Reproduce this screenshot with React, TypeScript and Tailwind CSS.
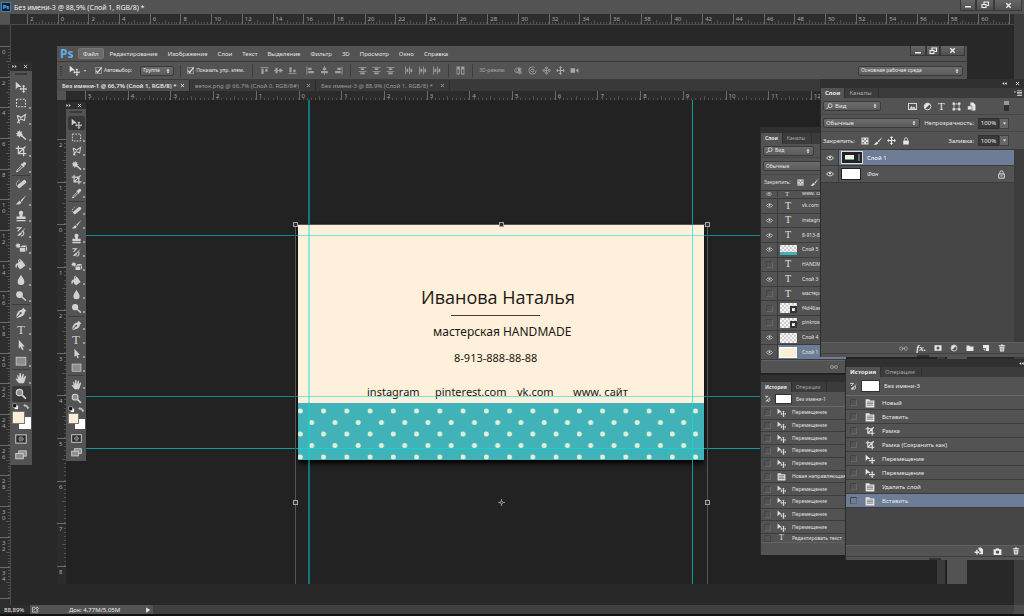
import type { ReactNode } from 'react';

type IconProps = { name: string; className?: string };

// 16x16 glyphs, drawn with currentColor
const glyphs: Record<string, ReactNode> = {
    move: (
        <>
            <path d="M1 1v10l3-3h5z" />
            <path d="M11.500 5l2.300 2.300h-1.500v2.400h2.400V8.200L16 10.500l-2 2.300v-1.500h-1.700v2.400h1.500L11.500 16l-2.300-2.300h1.500v-2.400H8.300v1.500L6 10.500l2.300-2.300v1.500h2.400V7.300H9.200z" />
        </>
    ),
    marquee: <rect x="2" y="3" width="12" height="10" fill="none" stroke="currentColor" strokeWidth="1.400" strokeDasharray="2.600 1.600" />,
    lasso: <path d="M3 3l5 3 6-4-1.500 8-5-2L5 11l1 3M3 3l2 8-2 2" fill="none" stroke="currentColor" strokeWidth="1.500" />,
    wand: (
        <>
            <path d="M6 1l1 2.800L9.500 3 8.600 5.500 11 7 8.600 8l.6 2.500L7 9.400 5.500 12l-.8-2.800L2 9.500l1.200-2.300L1 5.500l2.500-.6L3.200 2.200 5.300 3.500z" />
            <path d="M8 8l6.500 6" stroke="currentColor" strokeWidth="2" />
        </>
    ),
    crop: <path d="M4.500 1v10.500H15M1 4.500h10.500V15M5 11L14 2" fill="none" stroke="currentColor" strokeWidth="1.700" />,
    eyedropper: (
        <>
            <path d="M9.500 4l1-1.500c1-1.500 2.800-1.600 3.600-.6 1 .9.800 2.600-.6 3.600L12 6.500l.8.8-1.200 1.200-4-4 1.200-1.200z" />
            <path d="M9 6l-6 6-1 2.500L4.500 13.500l6-6" fill="none" stroke="currentColor" strokeWidth="1.300" />
        </>
    ),
    heal: (
        <>
            <rect x="2" y="5.500" width="14" height="5" rx="2.500" transform="rotate(-40 9 8)" />
            <path d="M2 10c-1-3 1-6 4-7" fill="none" stroke="currentColor" strokeWidth="1.200" strokeDasharray="1.500 1" />
        </>
    ),
    brush: (
        <>
            <path d="M15.500 1L7.500 8.500l1.500 1.800z" />
            <path d="M6.500 9l2 2.200C7.500 14 3.500 14.500 1 13.500c2.500-.5 2.500-3.500 5.500-4.500z" />
        </>
    ),
    stamp: <path d="M8 1a3 3 0 0 1 2 5.200V8.500h4V12H2V8.500h4V6.200A3 3 0 0 1 8 1zM2 13.200h12V15H2z" />,
    history: (
        <>
            <path d="M14.500 2L8 8l1 1.500zM7.500 8.500L9 10c-1 3-4 3.500-6.500 3 2-.7 2.500-3.500 5-4.500z" />
            <path d="M2 2.500h6L3.500 7M11 7c2 3 0 6-3 6.500" fill="none" stroke="currentColor" strokeWidth="1.500" />
        </>
    ),
    eraser: (
        <>
            <path d="M7 7l3-2.500h6L14 7zM6.500 8h7v5h-7zM14.500 8L16 6v4.500L14.500 13z" />
            <path d="M4 1l1 2 2-.5L6.300 4.500 8 6 6 6.500l-.5 2L4 7 2 8l.2-2.200L0 5l2-1.200L1.800 2l1.700.8z" />
        </>
    ),
    bucket: (
        <>
            <path d="M3 7l6-4 5 7-6.500 5C5 14 3 11 3 7z" />
            <path d="M9 6L6.500 1.500 5 2.500v4" fill="none" stroke="currentColor" strokeWidth="1.300" />
            <path d="M3 7c-3 1-3 4-1.500 7 .8-2 1-4 2.500-5z" />
        </>
    ),
    drop: <path d="M8 1c1.500 3.500 4.500 6 4.500 9A4.500 4.500 0 0 1 8 14.800 4.500 4.500 0 0 1 3.500 10C3.500 7 6.500 4.500 8 1z" />,
    dodge: (
        <>
            <circle cx="6" cy="6" r="4.500" />
            <path d="M9 9l5.500 5" stroke="currentColor" strokeWidth="2" />
        </>
    ),
    pen: (
        <>
            <path d="M11 1l4 4-2 1.500c0 4-3 6-7 7L2.500 15 2 14.500l5-5a1.400 1.400 0 1 0-.8-.8L1.500 13.500C2.500 8 4 4.500 9 3.500z" />
        </>
    ),
    arrow: <path d="M5 1v12l2.600-2.500L9.500 15l2-1-1.800-4H13z" />,
    shape: <rect x="1.500" y="3" width="13" height="10.500" fill="#8d8d8d" stroke="currentColor" />,
    hand: <path d="M5 15C3.500 12.500 2 11 .8 9.200 1.800 8 3.200 9 4 10L2.800 4.500C4 3.500 4.600 4.500 5.500 8L6 2c1-1 1.800-.5 2 0l.3 5.500L10.200 2.500c1-.7 1.800 0 1.600.8L11 8.500l2.200-3.300c1-.5 1.700.3 1.500 1C13.500 9.500 13 13 11.500 15z" />,
    zoom: (
        <>
            <circle cx="6" cy="6" r="4.200" fill="#8d8d8d" stroke="currentColor" strokeWidth="1.600" />
            <path d="M9.500 9.500l5 4.800" stroke="currentColor" strokeWidth="2.400" />
        </>
    ),
    mask: (
        <>
            <rect x="1" y="2.500" width="14" height="11" fill="#2c2c2c" stroke="currentColor" strokeWidth="1.300" />
            <circle cx="8" cy="8" r="3" fill="#6a6a6a" stroke="currentColor" strokeDasharray="1 1" />
        </>
    ),
    screens: (
        <>
            <rect x="5" y="2.500" width="10" height="7" fill="#8d8d8d" stroke="currentColor" strokeWidth="1.200" />
            <rect x="1" y="6" width="10" height="7" fill="#8d8d8d" stroke="currentColor" strokeWidth="1.200" />
        </>
    ),
    swap: <path d="M3 6c4-3 8-1 8 4M1 6l4-4v7zM8 9h6l-3 5z" stroke="currentColor" fill="currentColor" fillOpacity=".9" strokeWidth=".5" />,
    defaults: (
        <>
            <rect x="6" y="6" width="8" height="8" fill="#fff" />
            <rect x="2" y="2" width="8" height="8" fill="#111" stroke="#ddd" />
        </>
    ),
    eye: (
        <>
            <path d="M1 8c3-5 11-5 14 0-3 5-11 5-14 0z" fill="none" stroke="currentColor" strokeWidth="1.600" />
            <circle cx="8" cy="7" r="2" />
        </>
    ),
    doc: (
        <>
            <path d="M1 2h6l1 2h7v11H1z" />
            <path d="M3 6.500h10M3 9h10M3 11.500h10" stroke="#666" strokeWidth="1.200" />
        </>
    ),
    image: (
        <>
            <rect x="1" y="2.500" width="14" height="11" fill="none" stroke="currentColor" strokeWidth="1.600" />
            <path d="M3 12l3-5 2.500 3L11 8l2.500 4z" />
        </>
    ),
    adjust: (
        <>
            <circle cx="8" cy="8" r="6" fill="none" stroke="currentColor" strokeWidth="1.500" />
            <path d="M12.200 3.800A6 6 0 0 0 3.800 12.200z" />
        </>
    ),
    vector: (
        <>
            <rect x="3.500" y="3.500" width="9" height="9" fill="none" stroke="currentColor" strokeWidth="1.300" />
            <path d="M1 1h4v4H1zM11 1h4v4h-4zM1 11h4v4H1zM11 11h4v4h-4z" />
        </>
    ),
    smart: (
        <>
            <path d="M6 1h5l4 4v10H8V9H6z" />
            <path d="M1 7h8v7H1z" stroke="#535353" />
        </>
    ),
    checker: (
        <>
            <rect x="1" y="1" width="14" height="14" fill="#ddd" />
            <path d="M3 3h3v3H3zM10 3h3v3h-3zM6.500 6.500h3v3h-3zM3 10h3v3H3zM10 10h3v3h-3z" fill="#777" />
        </>
    ),
    cross: <path d="M8 0l3 3.500H9V7h3.500V5L16 8l-3.500 3V9H9v3.500h2L8 16l-3-3.500h2V9H3.500v2L0 8l3.500-3v2H7V3.500H5z" />,
    lock: (
        <>
            <path d="M2.500 7h11v8h-11z" />
            <path d="M5 7V4.500a3 3 0 0 1 6 0V7" fill="none" stroke="currentColor" strokeWidth="1.600" />
        </>
    ),
    lockOutline: (
        <>
            <path d="M3 7h10v7.500H3zM5 7V4.500a3 3 0 0 1 6 0V7M6 10.500h4" fill="none" stroke="currentColor" strokeWidth="1.600" />
        </>
    ),
    link: <path d="M7 8a3 3 0 1 1-6 0 3 3 0 0 1 6 0zm8 0a3 3 0 1 1-6 0 3 3 0 0 1 6 0zM5 8h6" fill="none" stroke="currentColor" strokeWidth="1.600" />,
    addMask: <path fillRule="evenodd" d="M1 2.500h14v11H1zM8 5a3 3 0 1 0 0 6 3 3 0 0 0 0-6z" />,
    folder: <path d="M1 3h5.500l1.500 2h7v9H1z" />,
    newLayer: <path d="M2 2h12v12H8V8H2zM2 9.500h4.500V14z" />,
    trash: <path fillRule="evenodd" d="M6 1h4v1.500h4.500v2h-13v-2H6zM3 5.500h10l-1 9.500H4zM5.500 7l.4 6.500h.9V7zM9.200 7v6.500h.9l.4-6.500z" />,
    camera: <path fillRule="evenodd" d="M1 4h4l1-2h4l1 2h4v10H1zM8 6a3 3 0 1 0 0 6 3 3 0 0 0 0-6z" />,
    newDoc: <path d="M8 1h4l4 3v9H9.500v-2.500h2v-3H9.500V5H8zM4 5h2.500v3h3v2.500h-3v3H4v-3H1V8h3z" />,
    search: (
        <>
            <circle cx="9.500" cy="6" r="4.500" fill="none" stroke="currentColor" strokeWidth="1.800" />
            <path d="M6 9l-5 5" stroke="currentColor" strokeWidth="2" />
        </>
    ),
    alignTop: <path d="M1 2h14v1.400H1zM2.500 5h4v9h-4zM9.500 5h4v5h-4z" />,
    alignMid: <path d="M0 7.300h16v1.400H0zM2.500 3h4v10h-4zM9.500 5h4v6h-4z" />,
    alignBottom: <path d="M1 13h14v1.400H1zM2.500 2h4v9h-4zM9.500 6h4v5h-4z" />,
    alignLeft: <path d="M1 1h1.400v14H1zM4 3h6v4H4zM4 9h10v4H4z" />,
    alignCenter: <path d="M7.300 0h1.400v16H7.300zM5 3h6v4H5zM2 9h12v4H2z" />,
    alignRight: <path d="M13.600 1H15v14h-1.400zM6 3h6v4H6zM2 9h10v4H2z" />,
    distV: <path d="M1 2h14v1.400H1zM5 4h6v3H5zM1 9h14v1.400H1zM4 11.500h8v3H4z" />,
    distH: <path d="M2 1h1.400v14H2zM4.500 5h3v6h-3zM9 1h1.400v14H9zM11.500 5h3v6h-3z" />,
    autoAlign: <path fillRule="evenodd" d="M1 1h6v14H1zM9 1h6v14H9zM2.500 6v7.500h3V6zM10.500 6v7.500h3V6z" />,
    orbit: (
        <>
            <path d="M14 6C11 2 3 3 1 7c-1 4 5 6 10 5l-1 2 4-2.500L11 9l.3 1.500C7 11 4 10 4 8" fill="none" stroke="currentColor" strokeWidth="1.400" />
            <circle cx="9.500" cy="7" r="2.600" />
        </>
    ),
    roll: (
        <>
            <circle cx="8" cy="8" r="6.500" fill="none" stroke="currentColor" strokeWidth="1.400" strokeDasharray="34 5" />
            <circle cx="8" cy="8" r="2.600" fill="none" stroke="currentColor" strokeWidth="1.600" />
        </>
    ),
    pan: <path d="M8 1l2.500 3h-5zM8 15l2.500-3h-5zM1 8l3-2.500v5zM15 8l-3-2.500v5zM8 5.500v5M5.500 8h5" fill="none" stroke="currentColor" strokeWidth="1.400" />,
    video: <path d="M1 4h8v8H1zM10 8l5-4v8z" />,
    share: <path d="M7 3H1v11h12v-4M5 10c0-4 2-5 6-5V2l4 4-4 4V7" fill="none" stroke="currentColor" strokeWidth="1.500" />,
    menu: <path d="M0 5h4L2 8zM6 3h10v1.500H6zM6 6h10v1.500H6zM6 9h10v1.500H6zM6 12h10v1.500H6z" />,
    check: <path d="M2 8l4 5 9-12" fill="none" stroke="currentColor" strokeWidth="2.600" />,
    updown: <path d="M8 2l4 5H4zM8 14l4-5H4z" />,
    restore: (
        <>
            <path d="M6 6V2h9v7h-4" fill="none" stroke="currentColor" strokeWidth="2.200" />
            <rect x="2" y="7" width="8" height="6" fill="none" stroke="currentColor" strokeWidth="2.200" />
        </>
    ),
    minimize: <path d="M2 10h12v3H2z" />,
    close: <path d="M3 3l10 10M13 3L3 13" stroke="currentColor" strokeWidth="3" />,
    play: <path d="M3 1l11 7-11 7z" />,
    down: <path d="M3 5h10l-5 6z" />,
    collapse: <path d="M7 3v10L1 8zM15 3v10L9 8z" />,
    expand: <path d="M1 3v10l6-5zM9 3v10l6-5z" />,
    pivot: <path d="M8 0v5M8 11v5M0 8h5M11 8h5M8 5a3 3 0 1 0 0 6 3 3 0 0 0 0-6" fill="none" stroke="currentColor" strokeWidth="1.800" />
};

function Icon({ name, className = 'size-[9px]' }: IconProps) {
    return (
        <svg viewBox="0 0 16 16" fill="currentColor" className={`shrink-0 ${className}`} aria-hidden="true">
            {glyphs[name]}
        </svg>
    );
}

function TypeGlyph({ className = 'text-[11px]' }: { className?: string }) {
    return <span className={`font-['Liberation_Serif',serif] leading-none ${className}`}>T</span>;
}

/* ---------- rulers ---------- */

function Ruler({ labels, vertical = false }: { labels: string[]; vertical?: boolean }) {
    return (
        <div className={`flex min-h-0 min-w-0 flex-1 ${vertical ? 'flex-col' : ''}`}>
            {labels.map((label, i) => (
                <div
                    key={i}
                    className={`relative flex min-h-0 min-w-0 flex-1 border-[#6a6a6a] text-[6px] leading-[6px] text-[#a8a8a8] ${vertical ? 'flex-col items-end border-t' : 'items-end border-l'}`}
                >
                    {Array.from({ length: 10 }, (_, t) => (
                        <i
                            key={t}
                            className={
                                vertical
                                    ? `flex-1 border-b border-[#505050] ${t === 4 ? 'w-1' : 'w-0.5'} last:border-0`
                                    : `flex-1 border-r border-[#505050] ${t === 4 ? 'h-1' : 'h-0.5'} last:border-0`
                            }
                        />
                    ))}
                    {label && (
                        <span className={`absolute ${vertical ? 'top-0.5 left-0.5 w-1 break-all' : 'top-0.5 left-0.5'}`}>
                            {label}
                        </span>
                    )}
                </div>
            ))}
        </div>
    );
}

const range = (from: number, to: number, step: number) => {
    const out: string[] = [];
    for (let n = from; n <= to; n += step) out.push(String(Math.abs(n)));
    return out;
};

/* ---------- small controls ---------- */

type SelectProps = { label: string; value: string; className: string; icon?: string };

function Select({ label, value, className, icon }: SelectProps) {
    return (
        <div className={`relative flex h-[10px] items-center rounded-xs border border-[#3a3a3a] bg-linear-to-b from-[#6c6c6c] to-[#5b5b5b] text-[#e8e8e8] ${className}`}>
            {icon && <Icon name={icon} className="ml-0.5 size-[7px]" />}
            <select aria-label={label} className="h-full w-full min-w-0 appearance-none pl-0.5 leading-none outline-none">
                <option>{value}</option>
            </select>
            <Icon name="updown" className="pointer-events-none absolute right-0.5 size-[6px]" />
        </div>
    );
}

function Check({ label }: { label: string }) {
    return (
        <label className="flex items-center gap-0.5 whitespace-nowrap">
            <span className="relative flex size-[7px]">
                <input type="checkbox" defaultChecked className="size-full appearance-none border border-[#8a8a8a] bg-[#5e5e5e]" />
                <Icon name="check" className="pointer-events-none absolute inset-0 size-[7px]" />
            </span>
            {label}
        </label>
    );
}

function Percent({ label, value }: { label: string; value: string }) {
    return (
        <label className="flex items-center gap-1 whitespace-nowrap">
            {label}
            <span className="flex h-[11px]">
                <input defaultValue={value} className="w-[21px] border border-[#303030] bg-[#393939] text-center text-[#ececec]" />
                <button aria-label={`${label} ▾`} className="flex w-[10px] items-center justify-center border border-[#404040] bg-[#666]">
                    <Icon name="down" className="size-[5px]" />
                </button>
            </span>
        </label>
    );
}

function WindowButtons({ small = false }: { small?: boolean }) {
    const cell = 'flex items-center justify-center border-x border-b border-[#383838] bg-linear-to-b from-[#666] to-[#505050] text-[#f0f0f0]';
    return (
        <div className={`flex self-start ${small ? 'h-[10px]' : 'h-[11px]'}`}>
            <button aria-label="Свернуть" className={`${cell} w-4`}><Icon name="minimize" className="size-[8px]" /></button>
            <button aria-label="Восстановить" className={`${cell} ${small ? 'w-[14px]' : 'w-[18px]'}`}><Icon name="restore" className="size-[8px]" /></button>
            <button aria-label="Закрыть" className={`${cell} ${small ? 'w-[25px]' : 'w-[28px]'}`}><Icon name="close" className="size-[7px]" /></button>
        </div>
    );
}

/* ---------- toolbox ---------- */

const toolGroups = [
    ['move', 'marquee', 'lasso', 'wand', 'crop', 'eyedropper'],
    ['heal', 'brush', 'stamp', 'history', 'eraser', 'bucket', 'drop', 'dodge'],
    ['pen', 'type', 'arrow', 'shape'],
    ['hand', 'zoom']
];

function Toolbox({ active, small = false }: { active: string; small?: boolean }) {
    const row = small ? 'h-[14px]' : 'h-4';
    const size = small ? 'size-[11px]' : 'size-[12px]';
    return (
        <div className={`bg-[#535353] text-[#d2d2d2] ${small ? 'w-5' : 'w-[22px]'}`}>
            <div className={`flex items-center justify-end gap-1.5 bg-[#2e2e2e] pr-1 ${small ? 'h-[7px]' : 'h-[9px]'}`}>
                <Icon name="expand" className="size-[5px]" />
                <Icon name="close" className="size-[5px]" />
            </div>
            <div className={`flex justify-center pt-0.5 ${small ? 'h-[7px]' : 'h-2'}`}>
                <div className="h-0.5 w-3 bg-[#3a3a3a]" />
            </div>
            {toolGroups.map((group, g) => (
                <div key={g}>
                    {g > 0 && <div className={`mx-0.5 h-px bg-[#3c3c3c] ${small ? 'my-px' : ''}`} />}
                    {group.map(tool => (
                        <button
                            key={tool}
                            aria-label={tool}
                            className={`relative mx-auto flex items-center justify-center rounded-xs ${row} ${small ? 'w-[17px]' : 'w-[19px]'} ${tool === active ? 'bg-[#383838]' : ''}`}
                        >
                            {tool === 'type' ? <TypeGlyph className="text-[13px]" /> : <Icon name={tool} className={size} />}
                            {tool !== 'move' && tool !== 'zoom' && (
                                <i className="absolute right-0 bottom-0.5 size-0.5 bg-[#9a9a9a]" />
                            )}
                        </button>
                    ))}
                </div>
            ))}
            <div className={`flex items-center justify-around ${small ? 'h-2' : 'h-[9px]'}`}>
                <Icon name="defaults" className="size-[7px]" />
                <Icon name="swap" className="size-[7px]" />
            </div>
            <div className={`relative mx-auto ${small ? 'h-[18px] w-[17px]' : 'h-5 w-[19px]'}`}>
                <div className={`absolute right-0 bottom-0.5 bg-white ${small ? 'size-[10px]' : 'size-[12px]'}`} />
                <div className={`absolute top-0 left-0 border border-[#777] bg-[#fdeed8] ${small ? 'size-[11px]' : 'size-[13px]'}`} />
            </div>
            <div className={`flex items-center justify-center ${row}`}><Icon name="mask" className={size} /></div>
            <div className={`flex items-center justify-center ${row}`}><Icon name="screens" className={size} /></div>
            <div className="h-0.5" />
        </div>
    );
}

/* ---------- panels ---------- */

function PanelTabs({ tabs, className = 'h-[10px]' }: { tabs: string[]; className?: string }) {
    return (
        <div className={`flex bg-[#3b3b3b] ${className}`}>
            {tabs.map((tab, i) => (
                <button
                    key={tab}
                    className={`border-r border-[#303030] px-1 ${i === 0 ? 'bg-[#535353] font-bold text-[#e8e8e8]' : 'pr-1.5 text-[#a8a8a8]'}`}
                >
                    {tab}
                </button>
            ))}
        </div>
    );
}

function Grip() {
    return (
        <div className="flex h-1 justify-center border-t border-[#404040] bg-[#535353] pt-px">
            <div className="h-0.5 w-3 bg-[#333]" />
        </div>
    );
}

function LayersPanel() {
    return (
        <section className="flex h-[278px] w-[204px] flex-col border-l border-[#2c2c2c] bg-[#535353] text-[6px] leading-none text-[#e8e8e8]">
            <div className="flex h-[9px] items-center justify-end gap-2 bg-[#303030] pr-1">
                <Icon name="collapse" className="size-[5px]" />
                <Icon name="close" className="size-[5px]" />
            </div>
            <div className="relative">
                <PanelTabs tabs={['Слои', 'Каналы']} />
                <Icon name="menu" className="absolute top-px right-0.5 size-[8px]" />
            </div>
            <div className="flex h-[17px] items-center border-b border-[#474747] pl-0.5">
                <Select label="Фильтр слоёв" value="Вид" icon="search" className="w-[58px]" />
                <div className="ml-[27px] flex items-center gap-1.5">
                    <Icon name="image" />
                    <Icon name="adjust" />
                    <TypeGlyph />
                    <Icon name="vector" className="ml-px size-[9px]" />
                    <Icon name="smart" />
                </div>
                <span className="mr-[15px] ml-auto h-[10px] w-[5px] border-t-4 border-[#999] bg-[#2f2f2f]" />
            </div>
            <div className="flex h-[17px] items-center justify-between border-b border-[#474747] pr-[15px] pl-0.5">
                <Select label="Режим наложения" value="Обычные" className="w-[97px]" />
                <Percent label="Непрозрачность:" value="100%" />
            </div>
            <div className="flex h-[17px] items-center pr-[15px] pl-0.5">
                Закрепить:
                <div className="ml-1.5 flex items-center gap-1">
                    <Icon name="checker" className="size-[8px]" />
                    <Icon name="brush" className="size-[10px]" />
                    <Icon name="cross" />
                    <Icon name="lock" className="ml-0.5 size-[8px]" />
                </div>
                <div className="ml-auto"><Percent label="Заливка:" value="100%" /></div>
            </div>
            <div className="flex min-h-0 flex-1 bg-[#3c3c3c]">
                <ul className="mr-2.5 flex-1 bg-[#464646]">
                    <li className="flex h-[17px] items-center border-y border-[#3a3a3a] bg-[#6c7d95]">
                        <span className="flex h-full w-[18px] items-center justify-center border-r border-[#3a3a3a] bg-[#535353]"><Icon name="eye" className="size-[8px]" /></span>
                        <span className="ml-0.5 flex h-[13px] w-[22px] items-center justify-center border border-[#ddd] bg-[#222]">
                            <i className="h-[5px] w-[9px] border-b border-[#3fb3b5] bg-[#fdeed8]" />
                            <i className="ml-1 h-[7px] w-0.5 bg-[#666]" />
                        </span>
                        <span className="ml-1 text-white">Слой 1</span>
                    </li>
                    <li className="flex h-[17px] items-center border-b border-[#3a3a3a] bg-[#535353]">
                        <span className="flex h-full w-[18px] items-center justify-center border-r border-[#3a3a3a]"><Icon name="eye" className="size-[8px]" /></span>
                        <span className="ml-0.5 h-[12px] w-5 border border-[#222] bg-white" />
                        <span className="ml-1.5 italic">Фон</span>
                        <Icon name="lockOutline" className="mr-2 ml-auto size-[9px]" />
                    </li>
                </ul>
            </div>
            <div className="flex h-[11px] items-center justify-end gap-2 border-t border-[#626262] pr-[18px]">
                <Icon name="link" className="size-[9px] text-[#a0a0a0]" />
                <span className="font-['Liberation_Serif',serif] text-[9px] font-bold italic">fx.</span>
                <Icon name="addMask" className="size-[8px]" />
                <Icon name="adjust" className="size-[8px]" />
                <Icon name="folder" className="size-[8px]" />
                <Icon name="newLayer" className="size-[8px]" />
                <Icon name="trash" className="size-[8px]" />
            </div>
            <Grip />
        </section>
    );
}

const history = [
    { icon: 'doc', name: 'Новый' },
    { icon: 'doc', name: 'Вставить' },
    { icon: 'crop', name: 'Рамка' },
    { icon: 'crop', name: 'Рамка (Сохранить как)' },
    { icon: 'move', name: 'Перемещение' },
    { icon: 'move', name: 'Перемещение' },
    { icon: 'doc', name: 'Удалить слой' },
    { icon: 'doc', name: 'Вставить' }
];

function HistoryPanel() {
    return (
        <section className="flex h-[201px] w-[179px] flex-col border-l border-[#2c2c2c] bg-[#535353] text-[6px] leading-none text-[#e8e8e8]">
            <div className="flex h-2 items-center justify-end bg-[#303030]"><Icon name="collapse" className="size-[5px]" /></div>
            <PanelTabs tabs={['История', 'Операции']} />
            <div className="flex h-[19px] items-center border-b border-[#6a6a6a] pl-[3px]">
                <Icon name="history" />
                <span className="ml-[3px] h-3 w-[19px] border border-[#333] bg-white" />
                <span className="ml-1">Без имени-3</span>
            </div>
            <ol className="flex-1 bg-[#464646]">
                {history.map((step, i) => (
                    <li
                        key={i}
                        className={`flex h-[14px] items-center border-b border-[#3c3c3c] pl-1 ${i === history.length - 1 ? 'bg-[#6c7d95]' : 'bg-[#535353]'}`}
                    >
                        <i className="size-[7px] border border-[#444] border-r-[#666] border-b-[#666]" />
                        <Icon name={step.icon} className="ml-2 size-[10px]" />
                        <span className="ml-[7px]">{step.name}</span>
                    </li>
                ))}
            </ol>
            <div className="flex h-[11px] items-center justify-end gap-2.5 border-t border-[#626262] pr-1">
                <Icon name="newDoc" />
                <Icon name="camera" />
                <Icon name="trash" className="size-[8px]" />
            </div>
            <Grip />
        </section>
    );
}

const docLayers = [
    { kind: 'type', name: 'vk.com', visible: true },
    { kind: 'type', name: 'instagram', visible: true },
    { kind: 'type', name: '8-913-888', visible: true },
    { kind: 'teal', name: 'Слой 5', visible: true },
    { kind: 'type', name: 'HANDMADE', visible: false },
    { kind: 'type', name: 'Слой 3', visible: true },
    { kind: 'type', name: 'мастерская', visible: false },
    { kind: 'smart', name: 'f4d46ae', visible: false },
    { kind: 'smart', name: 'pinkrose', visible: false },
    { kind: 'checker', name: 'Слой 4', visible: true },
    { kind: 'cream', name: 'Слой 1', visible: true }
];

function LayerThumb({ kind }: { kind: string }) {
    if (kind === 'type') return <TypeGlyph className="text-[10px]" />;
    if (kind === 'cream') return <i className="h-[11px] w-[18px] border border-white bg-[#fdeed8]" />;
    return (
        <svg viewBox="0 0 17 10" className="h-[10px] w-[17px]">
            <rect width="17" height="10" fill="#f6f6f6" />
            <path d="M0 1h17M0 5h17M0 9h17" stroke="#cfcfcf" strokeWidth="2" strokeDasharray="2 2" />
            <path d="M2 3h15M2 7h15" stroke="#cfcfcf" strokeWidth="2" strokeDasharray="2 2" />
            {kind === 'teal' && <rect y="7" width="17" height="3" fill="#3fb3b5" />}
            {kind === 'smart' && <path d="M10 3h7v7h-7zM12 5v3h3V5z" fill="#333" fillRule="evenodd" />}
        </svg>
    );
}

function DocLayersPanel() {
    return (
        <section className="flex h-[246px] w-[86px] flex-col overflow-hidden border-l border-[#2c2c2c] bg-[#535353] text-[5px] leading-none text-[#e0e0e0]">
            <div className="h-[6px] shrink-0 bg-[#303030]" />
            <PanelTabs tabs={['Слои', 'Каналы']} className="h-[11px] shrink-0" />
            <div className="flex h-[14px] items-center border-b border-[#474747] pl-0.5">
                <Select label="Фильтр слоёв документа" value="Вид" icon="search" className="w-[51px]" />
            </div>
            <div className="flex h-[17px] items-center border-b border-[#474747] pl-0.5">
                <Select label="Наложение слоя" value="Обычные" className="w-[80px]" />
            </div>
            <div className="flex h-[15px] items-center gap-1.5 pl-[3px]">
                Закрепить:
                <Icon name="checker" className="size-[7px]" />
                <Icon name="brush" />
            </div>
            <ul className="flex h-[170px] flex-col border-t border-[#3c3c3c]">
                <li className="flex h-2 shrink-0 items-start overflow-hidden border-b border-[#3c3c3c]">
                    <span className="flex w-[17px] justify-center border-r border-[#3a3a3a]"><Icon name="eye" className="size-[6px]" /></span>
                    <span className="flex w-[18px] justify-center"><TypeGlyph className="text-[6px]" /></span>
                    <span className="ml-1.5">www. сайт</span>
                </li>
                {docLayers.map((layer, i) => (
                    <li
                        key={layer.name}
                        className={`flex min-h-0 flex-1 items-center border-b border-[#3c3c3c] ${i === docLayers.length - 1 ? 'bg-[#6c7d95]' : ''}`}
                    >
                        <span className="flex h-full w-[17px] shrink-0 items-center justify-center border-r border-[#3a3a3a] bg-[#535353]">
                            {layer.visible ? <Icon name="eye" className="size-[7px]" /> : <i className="size-[7px] border border-[#444] border-r-[#666] border-b-[#666]" />}
                        </span>
                        <span className="ml-px flex w-[18px] shrink-0 items-center justify-center"><LayerThumb kind={layer.kind} /></span>
                        <span className="ml-[5px] whitespace-nowrap">{layer.name}</span>
                    </li>
                ))}
            </ul>
            <div className="flex flex-1 items-center justify-end border-t border-[#626262] pr-2">
                <Icon name="link" className="size-[8px] text-[#a0a0a0]" />
            </div>
        </section>
    );
}

const docHistory = ['move', 'move', 'move', 'move', 'move', 'doc', 'move', 'move', 'move', 'move'];

function DocHistoryPanel() {
    return (
        <section className="flex h-[180px] w-[86px] flex-col overflow-hidden border-l border-[#2c2c2c] bg-[#535353] text-[5px] leading-none text-[#e0e0e0]">
            <div className="h-[7px] shrink-0 bg-[#303030]" />
            <PanelTabs tabs={['История', 'Операции']} className="h-[10px] shrink-0" />
            <div className="flex h-[15px] shrink-0 items-center border-b border-[#6a6a6a] pl-[3px]">
                <Icon name="history" className="size-[8px]" />
                <span className="ml-[3px] h-[10px] w-[17px] border border-[#333] bg-white" />
                <span className="ml-1">Без имени-1</span>
            </div>
            <ol className="flex h-[135px] shrink-0 flex-col">
                {docHistory.map((icon, i) => (
                    <li key={i} className="flex min-h-0 flex-1 items-center border-b border-[#3c3c3c] pl-[3px]">
                        <i className="size-[7px] shrink-0 border border-[#444] border-r-[#666] border-b-[#666]" />
                        <Icon name={icon} className="ml-1.5 size-[9px]" />
                        <span className="ml-1.5 whitespace-nowrap">{icon === 'doc' ? 'Новая направляющая' : 'Перемещение'}</span>
                    </li>
                ))}
                <li className="flex h-2 items-center overflow-hidden pl-[3px]">
                    <i className="size-[7px] shrink-0 border border-[#444]" />
                    <TypeGlyph className="ml-2 text-[8px]" />
                    <span className="ml-2 whitespace-nowrap">Редактировать текст</span>
                </li>
            </ol>
            <div className="flex-1 border-t border-[#626262]" />
        </section>
    );
}

/* ---------- business card document ---------- */

function BusinessCard() {
    return (
        <div className="flex h-[235px] w-[406px] flex-col bg-[#fef0db] font-['Noto_Sans',sans-serif] text-[#1c1712]">
            <h1 className="mt-[60px] ml-[123px] font-['Open_Sans','Noto_Sans',sans-serif] text-[18px] leading-6">Иванова Наталья</h1>
            <div className="mt-[6px] ml-[153px] h-px w-[89px] bg-[#4b4038]" />
            <p className="mt-[8px] ml-[135px] text-[12px] leading-4">мастерская HANDMADE</p>
            <p className="mt-[10px] ml-[156px] text-[11px] leading-4">8-913-888-88-88</p>
            <p className="mt-[18px] ml-[69px] flex text-[11px] leading-4 whitespace-nowrap">
                <span className="w-[68px]">instagram</span>
                <span className="w-[82px]">pinterest.com</span>
                <span className="w-[56px]">vk.com</span>
                <span>www. сайт</span>
            </p>
            <svg className="mt-auto h-[57px] w-full shrink-0">
                <pattern id="dots" width="23.250" height="23" patternUnits="userSpaceOnUse">
                    <rect width="24" height="23" fill="#41b2b7" />
                    <circle cx="2.300" cy="8" r="2.500" fill="#dff0d8" />
                    <circle cx="13.700" cy="19.500" r="2.500" fill="#dff0d8" />
                </pattern>
                <rect width="100%" height="100%" fill="url(#dots)" />
            </svg>
        </div>
    );
}

function Handle({ className }: { className: string }) {
    return <i className={`absolute size-[5px] border border-[#a5a5a5] bg-[#333] ${className}`} />;
}

function DocCanvas() {
    return (
        <div className="relative min-w-0 flex-1 overflow-hidden bg-[#222]">
            <div className="absolute top-[125px] left-[232px] shadow-md shadow-black"><BusinessCard /></div>

            {/* guides */}
            <i className="absolute top-[135px] left-0 h-px w-full bg-[#00e0e0]/55" />
            <i className="absolute top-[296px] left-0 h-px w-full bg-[#00e0e0]/55" />
            <i className="absolute top-[348px] left-0 h-px w-full bg-[#00e0e0]/65" />
            <i className="absolute top-0 left-[242px] h-full w-0.5 bg-[#00e0e0]/45" />
            <i className="absolute top-0 left-[626px] h-full w-px bg-[#00e0e0]/65" />

            {/* transform frame */}
            <div className="absolute top-[124px] bottom-0 left-[229px] w-[413px] border-x border-t border-[#555]">
                <Handle className="-top-[3px] -left-[3px]" />
                <Handle className="-top-[3px] left-[203px]" />
                <Handle className="-top-[3px] -right-[3px]" />
                <Handle className="top-[275px] -left-[3px]" />
                <Handle className="top-[275px] -right-[3px]" />
                <Icon name="pivot" className="absolute top-[274px] left-[202px] size-[7px] text-[#b5b5b5]" />
            </div>

            <div className="absolute top-0.5 left-0"><Toolbox active="move" small /></div>
        </div>
    );
}

/* ---------- nested editor window ---------- */

const menu = ['Файл', 'Редактирование', 'Изображение', 'Слои', 'Текст', 'Выделение', 'Фильтр', '3D', 'Просмотр', 'Окно', 'Справка'];

const docTabs = [
    { title: 'Без имени-1 @ 66,7% (Слой 1, RGB/8) *', width: 'w-[133px]' },
    { title: 'веток.png @ 66,7% (Слой 0, RGB/8#)', width: 'w-[126px]' },
    { title: 'Без имени-3 @ 88,9% (Слой 1, RGB/8) *', width: 'w-[134px]' }
];

const optionGroups = [
    ['alignTop', 'alignMid', 'alignBottom', 'alignLeft', 'alignCenter', 'alignRight'],
    ['distV', 'distV', 'distV', 'distH', 'distH', 'distH'],
    ['autoAlign']
];

function EditorWindow() {
    return (
        <div className="flex h-[538px] w-[910px] flex-col bg-[#222] text-[6px] leading-none text-[#e4e4e4]">
            <nav className="flex h-4 shrink-0 items-center border-b border-[#3a3a3a] bg-[#535353] pl-[3px]">
                <span className="mr-[3px] w-[15px] text-[12px] font-bold text-[#5fb0e6]">Ps</span>
                {menu.map((item, i) => (
                    <button key={item} className={`h-[11px] rounded-xs ${i === 0 ? 'mr-px border border-[#777] bg-[#6b6b6b] px-1' : 'px-[5px]'}`}>
                        {item}
                    </button>
                ))}
                <div className="mr-0.5 ml-auto flex self-start"><WindowButtons small /></div>
            </nav>

            <div className="flex h-[18px] shrink-0 items-center border-b border-[#3a3a3a] bg-[#535353] pr-1 pl-[3px] text-[5px]">
                <i className="h-[10px] w-0.5 border-x border-dotted border-[#3a3a3a]" />
                <Icon name="move" className="ml-[7px] size-[11px]" />
                <Icon name="down" className="mr-2 ml-[3px] size-1" />
                <Check label="Автовыбор:" />
                <Select label="Автовыбор" value="Группа" className="mr-1.5 ml-2 w-[34px]" />
                <i className="mr-1.5 h-3 w-px bg-[#3d3d3d]" />
                <Check label="Показать упр. элем." />
                {optionGroups.map((group, g) => (
                    <div key={g} className={`flex items-center gap-[5px] border-l border-[#3d3d3d] py-0.5 pl-[7px] text-[#a0a0a0] ${g === 0 ? 'ml-2' : 'ml-[7px]'}`}>
                        {group.map((icon, i) => (
                            <Icon key={i} name={icon} className={i === 3 ? 'ml-1 size-[9px]' : 'size-[9px]'} />
                        ))}
                    </div>
                ))}
                <div className="ml-[7px] flex items-center gap-[5px] border-l border-[#3d3d3d] py-0.5 pl-[6px] text-[#a8a8a8]">
                    <span className="mr-1">3D-режим:</span>
                    <Icon name="orbit" />
                    <Icon name="roll" />
                    <Icon name="pan" />
                    <Icon name="cross" />
                    <Icon name="video" />
                </div>
                <Select label="Рабочая среда" value="Основная рабочая среда" className="ml-auto w-[105px]" />
            </div>

            <div className="flex h-[11px] shrink-0 bg-[#393939]">
                {docTabs.map((tab, i) => (
                    <div
                        key={tab.title}
                        className={`flex items-center justify-between border-r border-[#2b2b2b] pr-1 pl-[5px] whitespace-nowrap ${tab.width} ${i === 0 ? 'bg-[#4e4e4e] font-semibold' : 'text-[#9c9c9c]'}`}
                    >
                        <span>{tab.title}</span>
                        <button aria-label={`Закрыть ${tab.title}`}><Icon name="close" className="size-[5px]" /></button>
                    </div>
                ))}
            </div>

            <div className="flex h-[9px] shrink-0 bg-[#2b2b2b]">
                <i className="w-[28px] border-l-[9px] border-[#535353]" />
                <Ruler labels={[...range(-5, 12, 1), '', '']} />
                <i className="w-[28px]" />
            </div>

            <div className="flex min-h-0 flex-1">
                <div className="flex w-[9px] flex-col bg-[#2b2b2b]">
                    <i className="h-[39px]" />
                    <Ruler labels={range(-2, 7, 1)} vertical />
                    <i className="h-[18px] border-t border-[#6a6a6a] pt-0.5 pl-0.5 text-[#a8a8a8] not-italic">8</i>
                </div>
                <DocCanvas />
                <div className="mr-0.5 w-2 bg-[#3a3a3a]" />
                <div className="w-5 bg-[#535353]" />
            </div>
        </div>
    );
}

export default function App() {
    return (
        <div className="relative flex h-screen flex-col overflow-hidden bg-[#111] font-['Noto_Sans','Open_Sans',sans-serif]">
            <header className="flex h-[14px] shrink-0 items-center bg-[#535353] text-[7px] leading-none text-[#f0f0f0]">
                <span className="ml-px flex size-[10px] items-center justify-center border border-[#3b86b8] bg-[#0a1f38] text-[6px] font-bold text-[#62b4ec]">Ps</span>
                <span className="ml-[3px]">Без имени-3 @ 88,9% (Слой 1, RGB/8) *</span>
                <div className="mr-0.5 ml-auto flex self-start"><WindowButtons /></div>
            </header>

            <div className="flex min-h-0 flex-1">
                <div className="flex min-w-0 flex-1 flex-col">
                    <div className="flex h-[11px] shrink-0 border-b border-[#4a4a4a] bg-[#2d2d2d]">
                        <i className="w-[27px] border-l-[10px] border-[#535353]" />
                        <Ruler labels={range(-2, 60, 2)} />
                        <i className="w-[5px] border-l border-[#6a6a6a]" />
                    </div>
                    <div className="flex min-h-0 flex-1">
                        <div className="flex w-[11px] shrink-0 flex-col border-r border-[#4a4a4a] bg-[#2d2d2d]">
                            <i className="h-[21px]" />
                            <Ruler labels={range(0, 34, 2)} vertical />
                            <i className="h-[7px] border-t border-[#6a6a6a]" />
                        </div>
                        <main className="relative min-w-0 flex-1 overflow-hidden bg-[#282828]">
                            <div className="absolute top-[21px] left-[46px]">
                                <EditorWindow />
                                <div className="absolute top-[81px] left-[703px]"><DocLayersPanel /></div>
                                <div className="absolute top-[329px] left-[703px]"><DocHistoryPanel /></div>
                            </div>
                        </main>
                    </div>
                </div>
                <div className="w-[10px] bg-[#3d3d3d]" />
            </div>

            <footer className="mb-0.5 flex h-[9px] shrink-0 items-center bg-[#404040] text-[6px] leading-none text-[#e8e8e8]">
                <span className="flex h-full w-[30px] items-center bg-[#2d2d2d] pl-1">88,89%</span>
                <div className="flex h-full w-[123px] items-center bg-[#535353] pr-0.5">
                    <Icon name="share" className="ml-0.5 size-[7px]" />
                    <span className="ml-[30px]">Док: 4,77M/5,05M</span>
                    <Icon name="play" className="ml-auto size-[6px]" />
                </div>
                <i className="ml-auto h-full w-[10px] bg-[#4d4d4d]" />
            </footer>

            {/* floating palettes */}
            <div className="absolute top-[62px] left-[10px]"><Toolbox active="zoom" /></div>
            <div className="absolute top-[79px] right-0"><LayersPanel /></div>
            <div className="absolute top-[359px] right-0"><HistoryPanel /></div>
        </div>
    );
}
